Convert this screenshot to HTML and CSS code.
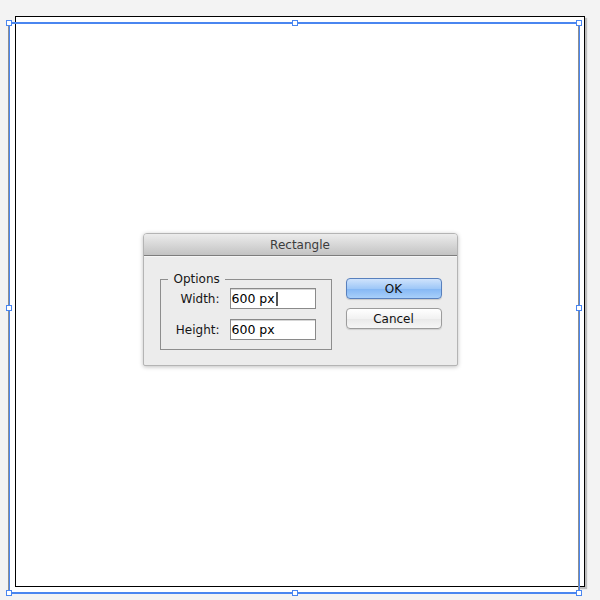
FILE: index.html
```html
<!DOCTYPE html>
<html lang="en">
<head>
    <meta charset="UTF-8">
    <meta name="viewport" content="width=device-width, initial-scale=1.0">
    <title>Rectangle</title>
    <link rel="stylesheet" href="styles.css">
</head>
<body>
    <div id="artboard">
        <div id="dialog">
            <div class="dialog-title">Rectangle</div>
            <div class="dialog-body">
                <fieldset class="options">
                    <legend>Options</legend>
                    <label class="field-label">Width:</label>
                    <div class="field">600 px<span class="caret"></span></div>
                    <label class="field-label">Height:</label>
                    <div class="field">600 px</div>
                </fieldset>
                <div class="buttons">
                    <button class="okButton">OK</button>
                    <button class="cancelButton">Cancel</button>
                </div>
            </div>
        </div>
    </div>

    <!-- selection frame of the rectangle, drawn over the artboard -->
    <div id="selection">
        <span class="handle tl"></span>
        <span class="handle tm"></span>
        <span class="handle tr"></span>
        <span class="handle ml"></span>
        <span class="handle mr"></span>
        <span class="handle bl"></span>
        <span class="handle bm"></span>
        <span class="handle br"></span>
    </div>
</body>
</html>
```

FILE: styles.css
```css
body {
    margin: 0;
    height: 600px;
    background-color: #f3f3f3;
    font-family: 'DejaVu Sans', 'Liberation Sans', sans-serif;
    font-size: 12px;
    color: #161616;
    position: relative;
    overflow: hidden;
}

#artboard {
    box-sizing: border-box;
    width: 570px;
    height: 571px;
    margin: 16px 0 0 15px;
    padding-bottom: 4px;
    background-color: #fff;
    border: 1px solid #000;
    /* white fill of the selected rectangle, then the artboard shadow */
    box-shadow: -6px 6px 0 #fff, 2px 2px 1px rgba(0, 0, 0, 0.22);
    display: flex;
    align-items: center;
    justify-content: center;
}

#dialog {
    width: 315px;
    box-sizing: border-box;
    border: 1px solid #b4b4b4;
    border-radius: 4px 4px 2px 2px;
    background-color: #ececec;
    box-shadow: 0 1px 4px rgba(0, 0, 0, 0.25);
    overflow: hidden;
}

.dialog-title {
    height: 21px;
    line-height: 22px;
    text-align: center;
    color: #3c3c3c;
    background: linear-gradient(#ececec, #c3c3c3);
    border-bottom: 1px solid #7d7d7d;
    box-shadow: 0 1px 0 #f6f6f6;
}

.dialog-body {
    display: flex;
    align-items: flex-start;
    padding: 16px 15px 15px 16px;
}

.options {
    box-sizing: border-box;
    width: 172px;
    height: 78px;
    margin: 0;
    padding: 1px 15px 8px 0;
    border: 1px solid #8e8e8e;
    display: grid;
    grid-template-columns: 59px 86px;
    grid-auto-rows: 21px;
    column-gap: 10px;
    row-gap: 10px;
    align-items: center;
}

.options legend {
    margin-left: 7px;
    padding: 0 5px 0 6px;
    line-height: 15px;
}

.field-label {
    text-align: right;
}

.field {
    box-sizing: border-box;
    height: 21px;
    border: 1px solid #8a8a8a;
    box-shadow: inset 0 1px 0 #d6d6d6;
    background-color: #fff;
    padding-left: 1px;
    font-size: 12.5px;
    line-height: 19px;
    color: #000;
    display: flex;
    align-items: center;
}

.caret {
    display: inline-block;
    width: 2px;
    height: 14px;
    margin-left: 1px;
    background-color: #555;
}

.buttons {
    display: flex;
    flex-direction: column;
    gap: 9px;
    margin: 6px 0 0 14px;
}

button {
    box-sizing: border-box;
    width: 96px;
    height: 21px;
    padding: 0;
    font-family: inherit;
    font-size: 12px;
    color: #111;
    border-radius: 4px;
    cursor: pointer;
}

.okButton {
    border: 1px solid #5880bd;
    background: linear-gradient(#cfe3fc, #9fc8f8 50%, #84b7f4 51%, #a8cffa);
    box-shadow: 0 1px 1px rgba(0, 0, 0, 0.15);
}

.cancelButton {
    border: 1px solid #9c9c9c;
    background: linear-gradient(#ffffff, #f2f2f2 50%, #e9e9e9 51%, #f6f6f6);
    box-shadow: 0 1px 1px rgba(0, 0, 0, 0.12);
}

#selection {
    position: absolute;
    left: 9px;
    top: 22px;
    width: 571px;
    height: 572px;
    box-sizing: border-box;
    border-style: solid;
    border-color: #4a86f0;
    border-width: 2px 1px 2px 1px;
    box-shadow: -1px 0 0 #8f8f8f, inset -1px 0 0 #8f8f8f;
}

.handle {
    position: absolute;
    width: 6px;
    height: 6px;
    box-sizing: border-box;
    border: 1px solid #4a86f0;
    background-color: #fff;
}

.tl { left: -4px; top: -4px; }
.tm { left: calc(50% - 3px); top: -4px; }
.tr { right: -3px; top: -4px; }
.ml { left: -4px; top: calc(50% - 3px); }
.mr { right: -3px; top: calc(50% - 3px); }
.bl { left: -4px; bottom: -4px; }
.bm { left: calc(50% - 3px); bottom: -4px; }
.br { right: -3px; bottom: -4px; }
```
